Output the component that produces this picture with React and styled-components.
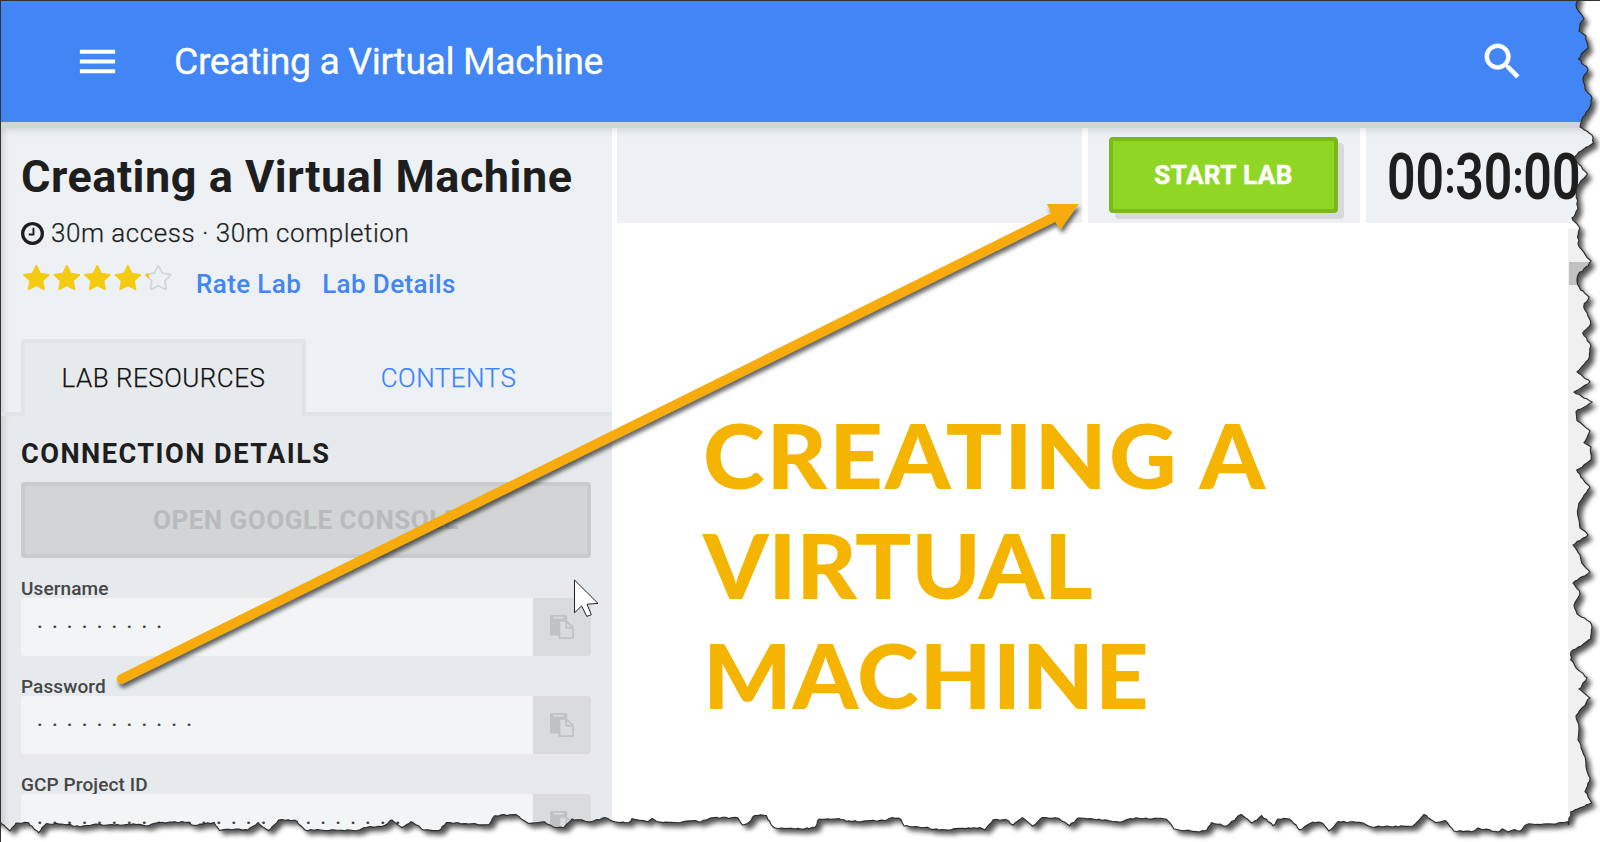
import React from "react";
import styled, { createGlobalStyle } from "styled-components";

const GlobalStyle = createGlobalStyle`
  *, *::before, *::after { box-sizing: border-box; }
  html, body { margin: 0; padding: 0; background: #fff; overflow: hidden; }
  body { font-family: Roboto, "Liberation Sans", sans-serif; color: #1e1e1e; }
`;

const Page = styled.div`
  position: relative;
  display: flex;
  flex-direction: column;
  width: 1600px;
  height: 842px;
  overflow: hidden;
  background: #fff;
  border-top: 1px solid #333;
  border-left: 1px solid #333;
`;

const Header = styled.header`
  flex: none;
  z-index: 1;
  display: flex;
  align-items: center;
  height: 127px;
  padding: 0 74px 1px 73px;
  background: #4285f4;
  background-clip: padding-box;
  border-bottom: 6px solid #d3d4d7;
  box-shadow: 0 2px 8px rgba(0, 0, 0, 0.13);
  color: #fff;
`;

const HeaderIcon = styled.svg`
  flex: none;
  width: 47px;
  height: 47px;
  fill: #fff;
  stroke: #fff;
  stroke-width: ${(p) => p.$weight || 0};
`;

const HeaderTitle = styled.div`
  flex: 1;
  padding: 0 0 0 53px;
  font-size: 37.4px;
  font-weight: 400;
  line-height: 48px;
  letter-spacing: -0.4px;
  -webkit-text-stroke: 0.3px currentColor;
  white-space: nowrap;
`;

const Body = styled.div`
  flex: 1;
  display: flex;
  min-height: 0;
`;

const Sidebar = styled.aside`
  flex: none;
  display: flex;
  flex-direction: column;
  width: 611px;
  background: #edf1f4;
  box-shadow: inset 7px 0 6px -5px rgba(60, 60, 60, 0.2);
  overflow: hidden;
`;

const LabInfo = styled.div`
  height: 211px;
  padding: 21px 20px 0;
`;

const LabTitle = styled.h1`
  margin: 0;
  font-size: 45px;
  font-weight: 700;
  line-height: 56px;
  letter-spacing: 0.5px;
  white-space: nowrap;
`;

const LabMeta = styled.div`
  display: flex;
  align-items: center;
  gap: 7px;
  height: 34px;
  margin-top: 11px;
  font-size: 26px;
  font-weight: 300;
  letter-spacing: 0.53px;
  -webkit-text-stroke: 0.25px currentColor;
  white-space: nowrap;
`;

const ClockIcon = styled.svg`
  width: 23px;
  height: 23px;
  fill: #1e1e1e;
`;

const RatingRow = styled.div`
  display: flex;
  height: 34px;
  margin-top: 14px;
`;

const Stars = styled.svg`
  width: 152px;
  height: 30px;
  margin: 0 23px 0 0;
`;

const LabLink = styled.a`
  margin-right: 21px;
  padding-top: 5px;
  color: #4285f4;
  font-size: 26px;
  font-weight: 500;
  line-height: 30px;
  letter-spacing: 0.38px;
  white-space: nowrap;
`;

const Tabs = styled.div`
  display: flex;
  flex: none;
  height: 77px;
  padding-left: 20px;
  background: linear-gradient(#e0e4e6, #e0e4e6) 0 100% / 100% 4px no-repeat;
`;

const Tab = styled.div`
  flex: ${(p) => (p.$active ? "0 0 285px" : "1")};
  display: flex;
  align-items: center;
  justify-content: center;
  padding: 0 ${(p) => (p.$active ? 0 : 21)}px 4px 0;
  border: ${(p) => (p.$active ? "4px solid #e0e4e6" : "4px solid transparent")};
  border-bottom: 0;
  border-radius: 4px 4px 0 0;
  background: ${(p) => (p.$active ? "#e6eaec" : "transparent")};
  color: ${(p) => (p.$active ? "#111" : "#3b82fb")};
  font-size: 26px;
  font-weight: 300;
  letter-spacing: 0.48px;
  -webkit-text-stroke: 0.25px currentColor;
  white-space: nowrap;
`;

const Resources = styled.div`
  flex: 1;
  min-height: 0;
  padding: 30px 21px 0 20px;
  background: #e6eaec;
  box-shadow: inset 7px 0 6px -5px rgba(60, 60, 60, 0.2);
`;

const SectionTitle = styled.h2`
  margin: 0 0 19px;
  font-size: 27.2px;
  font-weight: 700;
  line-height: 17px;
  letter-spacing: 1.45px;
  white-space: nowrap;
`;

const ConsoleButton = styled.button`
  display: block;
  width: 100%;
  height: 76px;
  padding: 0;
  border: 4px solid #c8cacb;
  border-radius: 4px;
  background: #d2d4d5;
  color: #b8babb;
  font: 700 26px Roboto, "Liberation Sans", sans-serif;
  letter-spacing: 0.5px;
  white-space: nowrap;
`;

const Field = styled.label`
  display: block;
  height: 98px;
`;

const FieldLabel = styled.div`
  height: 40px;
  padding: 20px 0 0;
  color: #454647;
  font-size: 19px;
  font-weight: 500;
  line-height: 22px;
  letter-spacing: 0.1px;
`;

const FieldBox = styled.div`
  display: flex;
  height: 58px;
  border-radius: 4px;
  overflow: hidden;
`;

const FieldValue = styled.div`
  flex: 1;
  padding-left: 16px;
  background: #f2f4f6;
  color: #444;
  font-size: 20px;
  font-weight: 500;
  line-height: 58px;
  letter-spacing: 9.25px;
  white-space: nowrap;
`;

const CopyButton = styled.div`
  display: flex;
  align-items: center;
  justify-content: center;
  width: 58px;
  background: #d9dbdc;
`;

const CopyIcon = styled.svg`
  width: 24px;
  height: 24px;
  fill: #bfc1c3;
`;

const Main = styled.main`
  flex: 1;
  display: flex;
  flex-direction: column;
  min-width: 0;
  padding-left: 5px;
`;

const ControlBar = styled.div`
  flex: none;
  display: flex;
  gap: 6px;
  height: 95px;
`;

const Cell = styled.div`
  flex: ${(p) => (p.$width ? `0 0 ${p.$width}px` : "1")};
  display: flex;
  padding: 9px 0 0 21px;
  background: #edf1f4;
`;

const StartButton = styled.button`
  width: 229px;
  height: 76px;
  padding: 0;
  border: 4px solid #7ab81d;
  border-radius: 4px;
  background: #8fd625;
  box-shadow: 6px 6px 0 #d7d9dd;
  color: #fff;
  font: 700 26px Roboto, "Liberation Sans", sans-serif;
  letter-spacing: 0.45px;
  -webkit-text-stroke: 0.5px currentColor;
  white-space: nowrap;
`;

const Timer = styled.div`
  display: flex;
  align-items: center;
  height: 80px;
  font-size: 65px;
  font-weight: 600;
  line-height: 80px;
  transform: scaleX(0.77);
  transform-origin: 0 50%;
`;

const Colon = styled.span`
  padding: 2px 0 0 1px;
  font-size: 44px;
  font-weight: 900;
`;

const Stage = styled.div`
  flex: 1;
  display: flex;
  min-height: 0;
`;

const Slide = styled.div`
  flex: 1;
  padding: 177px 0 0 86px;
`;

const SlideTitle = styled.div`
  display: flex;
  flex-direction: column;
  color: #f5b400;
  font-family: Lato, Inter, sans-serif;
  font-size: 89px;
  font-weight: 900;
  line-height: 110px;
  white-space: nowrap;
  transform: scaleX(1.05);
  transform-origin: 0 50%;
`;

const SlideLine = styled.span`
  letter-spacing: ${(p) => p.$tracking}px;
`;

const Scrollbar = styled.div`
  width: 32px;
  margin-top: 6px;
  padding: 33px 0 0 1px;
  background: #f0f0f0;
`;

const Thumb = styled.div`
  height: 23px;
  background: #c1c1c1;
`;

const Overlay = styled.svg`
  position: absolute;
  top: -1px;
  left: -1px;
  z-index: 2;
  width: 1600px;
  height: 842px;
  pointer-events: none;
`;

const RIGHT_EDGE = [
  [1578, 0], [1576, 4], [1576.5, 8], [1579, 12], [1584, 19], [1580, 24], [1579, 31], [1586, 36], [1588, 48],
  [1583.5, 52], [1578.5, 59], [1588, 69], [1583, 78], [1585, 89], [1592, 98], [1590, 107], [1583, 117],
  [1580, 127], [1592, 135], [1593.5, 143], [1579, 152], [1574.6, 157], [1577, 162], [1587.5, 174], [1579, 184],
  [1576, 192], [1578, 209], [1572, 218], [1577, 224], [1580, 228], [1577.5, 237], [1580, 248], [1591, 261],
  [1586, 267], [1578, 275], [1577, 282], [1580.7, 290], [1589, 297], [1583.7, 306.7], [1589, 318],
  [1590.7, 324], [1582.7, 333], [1591, 346], [1588, 360], [1577, 371.7], [1590, 382], [1574, 392], [1592, 402],
  [1576, 411.7], [1577, 420.7], [1583, 425], [1590, 431], [1584, 442.7], [1591, 447], [1591, 460],
  [1576.7, 470], [1583, 479], [1590, 487.7], [1579, 503], [1577.7, 515], [1580, 528], [1588, 535], [1573, 545],
  [1580, 555], [1581.7, 563], [1590, 572], [1573, 583], [1580, 593], [1574, 605], [1577, 614], [1590, 622],
  [1592, 628], [1590.7, 639], [1571, 651.7], [1570.7, 660], [1576, 668], [1587, 678], [1579, 689], [1590, 698],
  [1576, 715.7], [1579, 728], [1578, 740], [1585, 756.7], [1586, 766.7], [1590, 778], [1585, 791.7],
  [1591.7, 803], [1570.7, 812], [1568.5, 825],
];

const BOTTOM_EDGE = [
  [0, 821.7], [10, 831], [16, 823], [28.6, 822.7], [38.6, 832.7], [46.5, 823.5], [68, 824.5], [80, 827],
  [93, 824.5], [136, 824.5], [146, 826], [153.6, 823.5], [184, 822], [194.6, 825.5], [214, 822.5],
  [219.6, 830.5], [236, 829], [248, 830], [258, 822.5], [268.6, 830.5], [278.6, 820], [294.6, 820], [305, 830],
  [357, 830.5], [364, 827.5], [382, 826.5], [392, 820], [402, 827.5], [411, 821.7], [423, 830], [439, 830.5],
  [446.4, 822.5], [468, 824], [489, 824.5], [494.6, 815.7], [516, 814.5], [528.6, 823.5], [544.6, 821.7],
  [553.6, 827], [564, 827.7], [572, 819], [591, 821.7], [604.8, 817.5], [615, 821.7], [629, 822.5],
  [632, 818.7], [648, 821.7], [652, 818.5], [660, 822], [680.5, 822.5], [693, 820.7], [701, 822], [713, 817.7],
  [738, 818], [742.5, 825], [747.7, 823.5], [754.6, 815.5], [766.6, 815.7], [773, 826.7], [778.7, 828.5],
  [801, 829], [815, 827.5], [819, 819], [839, 818.5], [846, 821.5], [885.5, 820.7], [892, 817.5], [901, 819.5],
  [904, 826], [925, 827.5], [939, 830], [980, 827.7], [985, 830], [993, 820], [1006, 819.5], [1013, 825],
  [1022.5, 817.7], [1032.5, 826], [1042, 817.5], [1059, 818.5], [1069.6, 825.7], [1078, 818], [1093, 819],
  [1121, 822], [1130.6, 818.5], [1166, 819], [1174, 829], [1199, 832], [1207, 830], [1211.5, 822.7],
  [1227, 826], [1241.5, 814.5], [1252, 823], [1261.5, 815.5], [1273, 825.7], [1277.6, 819], [1289, 819],
  [1300, 830], [1313, 822], [1321, 822.5], [1328.6, 831], [1338, 821.5], [1363, 823], [1371.6, 827],
  [1413, 826], [1424, 814.5], [1435, 822.5], [1445.7, 820.7], [1454, 831], [1471.5, 831.7], [1478, 828],
  [1498, 832], [1502.5, 829], [1508, 832], [1514.5, 829.5], [1520.4, 831], [1526.6, 824.5], [1552.4, 824],
  [1568, 821.7],
];

// Splits each segment into short steps with a small, repeatable wobble.
function roughen(points, seed) {
  let state = seed;
  const rand = () => {
    state = (state * 16807) % 2147483647;
    return state / 2147483647 - 0.5;
  };
  const out = [points[0]];
  for (let i = 1; i < points.length; i++) {
    const [x0, y0] = points[i - 1];
    const [x1, y1] = points[i];
    const steps = Math.max(1, Math.round(Math.hypot(x1 - x0, y1 - y0) / 3));
    for (let s = 1; s <= steps; s++) {
      const t = s / steps;
      const k = s === steps ? 0 : 1.5;
      out.push([x0 + (x1 - x0) * t + rand() * k, y0 + (y1 - y0) * t + rand() * k]);
    }
  }
  return out;
}

const toPath = (pts) => pts.map(([x, y]) => `${x.toFixed(1)} ${y.toFixed(1)}`).join("L");
const edge = toPath([...roughen(RIGHT_EDGE, 41), ...roughen([...BOTTOM_EDGE].reverse(), 97)]);
const paper = `M0 0L${edge}Z`;
const outside = `M-20 -20H1620V862H-20Z${paper}`;
// The shadow caster runs past the top and left so that the shadow does not fade there.
const caster = `M-20 -20H1578L${edge}L-20 821Z`;

const STAR =
  "M1728 647q0 22-26 48l-363 354 86 500q1 7 1 20 0 50-41 50-19 0-40-12l-449-236-449 236q-22 12-40 12-21 0-31.500-14.500t-10.500-35.500q0-6 2-20l86-500-364-354q-25-27-25-48 0-37 56-46l502-73 225-455q19-41 49-41t49 41l225 455 502 73q56 9 56 46z";

function Annotations() {
  return (
    <Overlay viewBox="0 0 1600 842">
      <defs>
        <filter id="arrowShadow" x="-5%" y="-5%" width="110%" height="115%">
          <feDropShadow dx="2" dy="4" stdDeviation="2" floodColor="#000" floodOpacity="0.6" />
        </filter>
        <filter id="tornShadow" x="-5%" y="-5%" width="110%" height="110%">
          <feGaussianBlur stdDeviation="2.8" />
        </filter>
        <clipPath id="outsideClip">
          <path d={outside} clipRule="evenodd" />
        </clipPath>
      </defs>
      <path
        d="M574.5 580V612.8L581.6 605.9L586.8 616.4L591.3 614.7L587 604.2L598 603.4Z"
        fill="#fff"
        stroke="#222"
        strokeWidth="1"
      />
      <g filter="url(#arrowShadow)" fill="#f8ab07">
        <path d="M121.5 679L1056 216" fill="none" stroke="#f8ab07" strokeWidth="9.5" strokeLinecap="round" />
        <path d="M1078.6 204L1047 204L1052 215L1055 221L1060.4 229.5Z" />
      </g>
      <g clipPath="url(#outsideClip)">
        <path d={outside} fill="#fff" fillRule="evenodd" />
        <path d={caster} transform="translate(4.5 4.5)" fill="#000" opacity="0.68" filter="url(#tornShadow)" />
      </g>
      <path d={`M${edge}`} fill="none" stroke="#2a2a2a" strokeWidth="1.1" />
    </Overlay>
  );
}

function CredentialField({ label, length }) {
  return (
    <Field>
      <FieldLabel>{label}</FieldLabel>
      <FieldBox>
        <FieldValue>{"·".repeat(length)}</FieldValue>
        <CopyButton>
          <CopyIcon viewBox="0 0 1792 1792">
            <path d="M768 1664h896v-640h-416q-40 0-68-28t-28-68v-416h-384v1152zm256-1440v-64q0-13-9.500-22.500t-22.500-9.500h-704q-13 0-22.500 9.500t-9.500 22.500v64q0 13 9.500 22.500t22.500 9.500h704q13 0 22.500-9.500t9.500-22.500zm256 672h299l-299-299v299zm512 128v672q0 40-28 68t-68 28h-960q-40 0-68-28t-28-68v-160h-544q-40 0-68-28t-28-68v-1344q0-40 28-68t68-28h1088q40 0 68 28t28 68v328q21 13 36 28l408 408q28 28 48 76t20 88z" />
          </CopyIcon>
        </CopyButton>
      </FieldBox>
    </Field>
  );
}

export default function App() {
  return (
    <Page>
      <GlobalStyle />
      <Header>
        <HeaderIcon viewBox="0 0 24 24">
          <path d="M3 18h18v-2H3v2zm0-5h18v-2H3v2zm0-7v2h18V6H3z" />
        </HeaderIcon>
        <HeaderTitle>Creating a Virtual Machine</HeaderTitle>
        <HeaderIcon viewBox="0 0 24 24" $weight={0.35}>
          <path d="M15.5 14h-.79l-.28-.27C15.41 12.59 16 11.11 16 9.500 16 5.910 13.090 3 9.500 3S3 5.910 3 9.500 5.910 16 9.500 16c1.610 0 3.090-.59 4.230-1.570l.27.28v.79l5 4.990L20.490 19l-4.990-5zm-6 0C7.010 14 5 11.990 5 9.500S7.010 5 9.500 5 14 7.010 14 9.500 11.990 14 9.500 14z" />
        </HeaderIcon>
      </Header>
      <Body>
        <Sidebar>
          <LabInfo>
            <LabTitle>Creating a Virtual Machine</LabTitle>
            <LabMeta>
              <ClockIcon viewBox="128 128 1536 1536">
                <path d="M1024 544v448q0 14-9 23t-23 9h-320q-14 0-23-9t-9-23v-64q0-14 9-23t23-9h224v-352q0-14 9-23t23-9h64q14 0 23 9t9 23zm416 352q0-148-73-273t-198-198-273-73-273 73-198 198-73 273 73 273 198 198 273 73 273-73 198-198 73-273zm224 0q0 209-103 385.500t-279.500 279.500-385.500 103-385.500-103-279.500-279.500-103-385.500 103-385.500 279.500-279.500 385.500-103 385.500 103 279.500 279.500 103 385.500z" />
              </ClockIcon>
              <span>30m access · 30m completion</span>
            </LabMeta>
            <RatingRow>
              <Stars viewBox="0 0 152 30">
                <defs>
                  <clipPath id="partial">
                    <rect x="0" y="0" width="320" height="1792" />
                  </clipPath>
                </defs>
                {[0, 1, 2, 3].map((i) => (
                  <path
                    key={i}
                    d={STAR}
                    fill="#f4cb10"
                    transform={`translate(${1 + i * 30.5} 0.300) scale(0.016)`}
                  />
                ))}
                <g transform="translate(123 0.3) scale(0.016)">
                  <path
                    d={STAR}
                    fill="none"
                    stroke="#d3d6d9"
                    strokeWidth="120"
                    transform="translate(72 72) scale(0.92)"
                  />
                  <path d={STAR} fill="#f4cb10" clipPath="url(#partial)" />
                </g>
              </Stars>
              <LabLink>Rate Lab</LabLink>
              <LabLink>Lab Details</LabLink>
            </RatingRow>
          </LabInfo>
          <Tabs>
            <Tab $active>LAB RESOURCES</Tab>
            <Tab>CONTENTS</Tab>
          </Tabs>
          <Resources>
            <SectionTitle>CONNECTION DETAILS</SectionTitle>
            <ConsoleButton>OPEN GOOGLE CONSOLE</ConsoleButton>
            <CredentialField label="Username" length={9} />
            <CredentialField label="Password" length={11} />
            <CredentialField label="GCP Project ID" length={25} />
          </Resources>
        </Sidebar>
        <Main>
          <ControlBar>
            <Cell $width={465} />
            <Cell $width={272}>
              <StartButton>START LAB</StartButton>
            </Cell>
            <Cell>
              <Timer>
                00<Colon>:</Colon>30<Colon>:</Colon>00
              </Timer>
            </Cell>
          </ControlBar>
          <Stage>
            <Slide>
              <SlideTitle>
                <SlideLine $tracking={1.9}>CREATING A</SlideLine>
                <SlideLine $tracking={-0.3}>VIRTUAL</SlideLine>
                <SlideLine $tracking={0.8}>MACHINE</SlideLine>
              </SlideTitle>
            </Slide>
            <Scrollbar>
              <Thumb />
            </Scrollbar>
          </Stage>
        </Main>
      </Body>
      <Annotations />
    </Page>
  );
}
